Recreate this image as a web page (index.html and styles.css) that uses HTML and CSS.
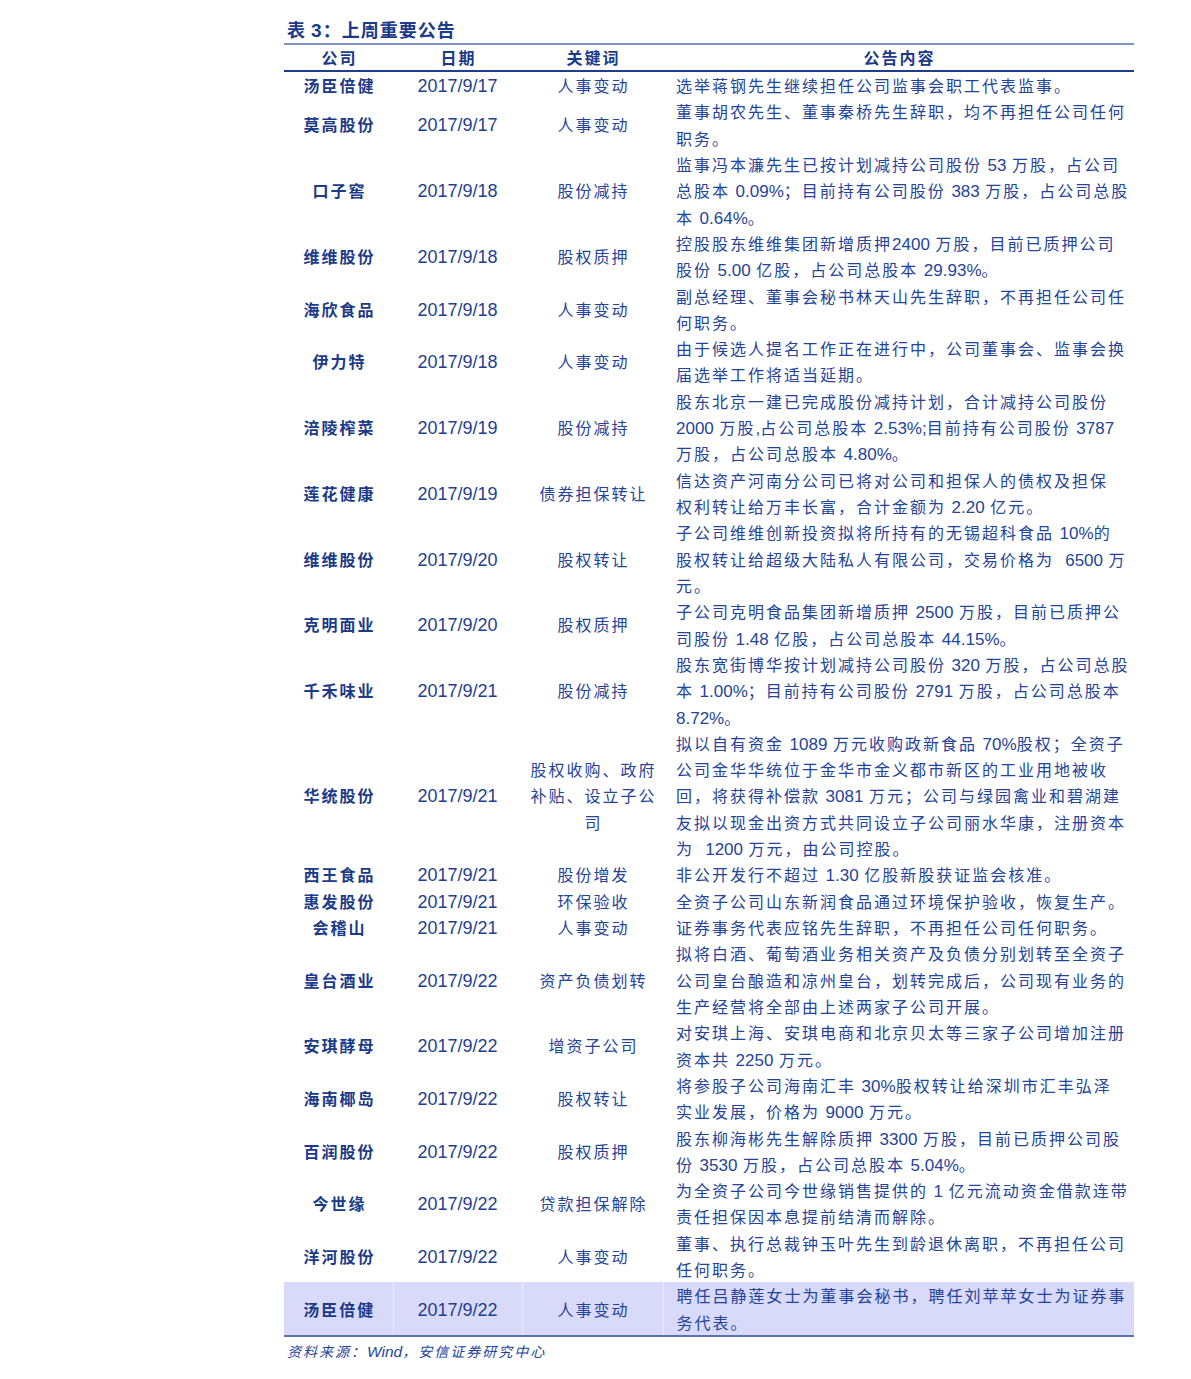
FILE: index.html
```html
<!DOCTYPE html>
<html lang="zh-CN">
<head>
<meta charset="utf-8">
<title>上周重要公告</title>
<link rel="stylesheet" href="styles.css">
</head>
<body>
<div class="page">
  <div class="title">表 <span class="tn">3</span>：上周重要公告</div>
  <table class="tbl">
    <colgroup>
      <col class="c1"><col class="c2"><col class="c3"><col class="c4">
    </colgroup>
    <thead>
      <tr><th>公司</th><th>日期</th><th>关键词</th><th>公告内容</th></tr>
    </thead>
    <tbody>
      <tr><td class="co">汤臣倍健</td><td class="dt">2017/9/17</td><td>人事变动</td><td class="txt">选举蒋钢先生继续担任公司监事会职工代表监事。</td></tr>
      <tr><td class="co">莫高股份</td><td class="dt">2017/9/17</td><td>人事变动</td><td class="txt">董事胡农先生、董事秦桥先生辞职，均不再担任公司任何<br>职务。</td></tr>
      <tr><td class="co">口子窖</td><td class="dt">2017/9/18</td><td>股份减持</td><td class="txt">监事冯本濂先生已按计划减持公司股份 <span class="n">53</span> 万股，占公司<br>总股本 <span class="n">0.09%</span>；目前持有公司股份 <span class="n">383</span> 万股，占公司总股<br>本 <span class="n">0.64%</span>。</td></tr>
      <tr><td class="co">维维股份</td><td class="dt">2017/9/18</td><td>股权质押</td><td class="txt">控股股东维维集团新增质押<span class="n">2400</span> 万股，目前已质押公司<br>股份 <span class="n">5.00</span> 亿股，占公司总股本 <span class="n">29.93%</span>。</td></tr>
      <tr><td class="co">海欣食品</td><td class="dt">2017/9/18</td><td>人事变动</td><td class="txt">副总经理、董事会秘书林天山先生辞职，不再担任公司任<br>何职务。</td></tr>
      <tr><td class="co">伊力特</td><td class="dt">2017/9/18</td><td>人事变动</td><td class="txt">由于候选人提名工作正在进行中，公司董事会、监事会换<br>届选举工作将适当延期。</td></tr>
      <tr><td class="co">涪陵榨菜</td><td class="dt">2017/9/19</td><td>股份减持</td><td class="txt">股东北京一建已完成股份减持计划，合计减持公司股份<br><span class="n">2000</span> 万股<span class="n">,</span>占公司总股本 <span class="n">2.53%;</span>目前持有公司股份 <span class="n">3787</span><br>万股，占公司总股本 <span class="n">4.80%</span>。</td></tr>
      <tr><td class="co">莲花健康</td><td class="dt">2017/9/19</td><td>债券担保转让</td><td class="txt">信达资产河南分公司已将对公司和担保人的债权及担保<br>权利转让给万丰长富，合计金额为 <span class="n">2.20</span> 亿元。</td></tr>
      <tr><td class="co">维维股份</td><td class="dt">2017/9/20</td><td>股权转让</td><td class="txt">子公司维维创新投资拟将所持有的无锡超科食品 <span class="n">10%</span>的<br>股权转让给超级大陆私人有限公司，交易价格为 &nbsp;<span class="n">6500</span> 万<br>元。</td></tr>
      <tr><td class="co">克明面业</td><td class="dt">2017/9/20</td><td>股权质押</td><td class="txt">子公司克明食品集团新增质押 <span class="n">2500</span> 万股，目前已质押公<br>司股份 <span class="n">1.48</span> 亿股，占公司总股本 <span class="n">44.15%</span>。</td></tr>
      <tr><td class="co">千禾味业</td><td class="dt">2017/9/21</td><td>股份减持</td><td class="txt">股东宽街博华按计划减持公司股份 <span class="n">320</span> 万股，占公司总股<br>本 <span class="n">1.00%</span>；目前持有公司股份 <span class="n">2791</span> 万股，占公司总股本<br><span class="n">8.72%</span>。</td></tr>
      <tr><td class="co">华统股份</td><td class="dt">2017/9/21</td><td>股权收购、政府<br>补贴、设立子公<br>司</td><td class="txt">拟以自有资金 <span class="n">1089</span> 万元收购政新食品 <span class="n">70%</span>股权；全资子<br>公司金华华统位于金华市金义都市新区的工业用地被收<br>回，将获得补偿款 <span class="n">3081</span> 万元；公司与绿园禽业和碧湖建<br>友拟以现金出资方式共同设立子公司丽水华康，注册资本<br>为 &nbsp;<span class="n">1200</span> 万元，由公司控股。</td></tr>
      <tr><td class="co">西王食品</td><td class="dt">2017/9/21</td><td>股份增发</td><td class="txt">非公开发行不超过 <span class="n">1.30</span> 亿股新股获证监会核准。</td></tr>
      <tr><td class="co">惠发股份</td><td class="dt">2017/9/21</td><td>环保验收</td><td class="txt">全资子公司山东新润食品通过环境保护验收，恢复生产。</td></tr>
      <tr><td class="co">会稽山</td><td class="dt">2017/9/21</td><td>人事变动</td><td class="txt">证券事务代表应铭先生辞职，不再担任公司任何职务。</td></tr>
      <tr><td class="co">皇台酒业</td><td class="dt">2017/9/22</td><td>资产负债划转</td><td class="txt">拟将白酒、葡萄酒业务相关资产及负债分别划转至全资子<br>公司皇台酿造和凉州皇台，划转完成后，公司现有业务的<br>生产经营将全部由上述两家子公司开展。</td></tr>
      <tr><td class="co">安琪酵母</td><td class="dt">2017/9/22</td><td>增资子公司</td><td class="txt">对安琪上海、安琪电商和北京贝太等三家子公司增加注册<br>资本共 <span class="n">2250</span> 万元。</td></tr>
      <tr><td class="co">海南椰岛</td><td class="dt">2017/9/22</td><td>股权转让</td><td class="txt">将参股子公司海南汇丰 <span class="n">30%</span>股权转让给深圳市汇丰弘泽<br>实业发展，价格为 <span class="n">9000</span> 万元。</td></tr>
      <tr><td class="co">百润股份</td><td class="dt">2017/9/22</td><td>股权质押</td><td class="txt">股东柳海彬先生解除质押 <span class="n">3300</span> 万股，目前已质押公司股<br>份 <span class="n">3530</span> 万股，占公司总股本 <span class="n">5.04%</span>。</td></tr>
      <tr><td class="co">今世缘</td><td class="dt">2017/9/22</td><td>贷款担保解除</td><td class="txt">为全资子公司今世缘销售提供的 <span class="n">1</span> 亿元流动资金借款连带<br>责任担保因本息提前结清而解除。</td></tr>
      <tr><td class="co">洋河股份</td><td class="dt">2017/9/22</td><td>人事变动</td><td class="txt">董事、执行总裁钟玉叶先生到龄退休离职，不再担任公司<br>任何职务。</td></tr>
      <tr class="hl"><td class="co">汤臣倍健</td><td class="dt">2017/9/22</td><td>人事变动</td><td class="txt">聘任吕静莲女士为董事会秘书，聘任刘苹苹女士为证券事<br>务代表。</td></tr>
    </tbody>
  </table>
  <div class="source">资料来源：<span class="sn">Wind</span>，安信证券研究中心</div>
</div>
</body>
</html>
```

FILE: styles.css
```css
body {
  margin: 0;
  background: #ffffff;
  color: #1d3c8a;
  font-family: "Noto Sans CJK SC", "Liberation Sans", sans-serif;
}

.page {
  width: 850px;
  margin-left: 284px;
  padding-top: 17px;
}

.title {
  font-size: 18px;
  font-weight: 700;
  line-height: 24px;
  letter-spacing: 1px;
  margin: 0 0 2px 3px;
  color: #1b3a88;
}

.title .tn {
  font-family: "Liberation Sans", sans-serif;
  font-size: 19px;
  line-height: 1;
}

.tbl {
  width: 850px;
  border-collapse: collapse;
  table-layout: fixed;
  border-top: 2px solid #8094c6;
  border-bottom: 2px solid #5c72b2;
}

.c1 { width: 109px; }
.c2 { width: 129px; }
.c3 { width: 141px; }
.c4 { width: 471px; }

.tbl th {
  padding: 0 0 0 2px;
  height: 25px;
  line-height: 25px;
  font-size: 16px;
  font-weight: 700;
  letter-spacing: 2px;
  text-align: center;
  border-bottom: 2px solid #1f3d8d;
  color: #1b3a88;
}

.tbl td {
  padding: 0 0 0 2px;
  line-height: 26.32px;
  font-size: 16px;
  letter-spacing: 2px;
  text-align: center;
  vertical-align: middle;
  color: #24449a;
}

.tbl td.co {
  font-weight: 700;
  color: #1b3a88;
}

.tbl td.dt {
  padding: 2px 0 0 0;
  line-height: 24.3px;
  font-family: "Liberation Sans", sans-serif;
  font-size: 18px;
  letter-spacing: 0;
  color: #1f3f90;
}

.tbl td.txt {
  text-align: left;
  padding-left: 13px;
  white-space: nowrap;
}

.n {
  font-family: "Liberation Sans", sans-serif;
  font-size: 17px;
  line-height: 1;
  letter-spacing: 0;
}

.tbl tr.hl td {
  background: #d9d9fa;
}

.tbl tr.hl td + td {
  border-left: 1px solid #ebebfc;
}

.source {
  margin: 4px 0 0 3px;
  font-size: 14px;
  line-height: 20px;
  font-style: italic;
  letter-spacing: 2px;
  color: #24449a;
}

.source .sn {
  font-family: "Liberation Sans", sans-serif;
  font-size: 15.5px;
  line-height: 1;
  letter-spacing: 0;
}
```
